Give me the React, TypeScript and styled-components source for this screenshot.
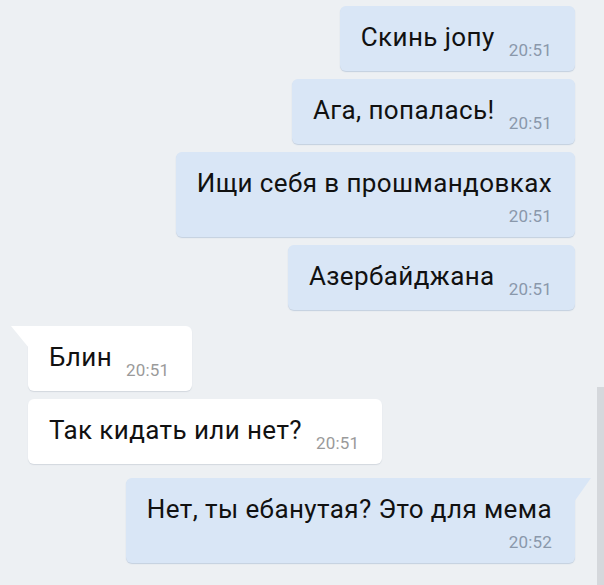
import React from 'react';
import styled, { createGlobalStyle, css } from 'styled-components';

const GlobalStyle = createGlobalStyle`
  html, body {
    margin: 0;
    padding: 0;
    background: #edf0f3;
  }
  body {
    font-family: Roboto, "Noto Sans", sans-serif;
  }
`;

const Screen = styled.div`
  position: relative;
  width: 604px;
  height: 585px;
  overflow: hidden;
  box-sizing: border-box;
  padding-top: 6px;
  background: #edf0f3;
  display: flex;
  flex-direction: column;
`;

const Row = styled.div<{ $out: boolean; $gap: number }>`
  display: flex;
  justify-content: ${p => (p.$out ? 'flex-end' : 'flex-start')};
  padding: ${p => (p.$out ? '0 29px 0 0' : '0 0 0 28px')};
  margin-top: ${p => p.$gap}px;
`;

const Bubble = styled.div<{ $out: boolean; $tail: boolean; $stacked: boolean }>`
  position: relative;
  display: flex;
  flex-direction: ${p => (p.$stacked ? 'column' : 'row')};
  align-items: ${p => (p.$stacked ? 'stretch' : 'flex-end')};
  gap: ${p => (p.$stacked ? '0' : '14px')};
  padding: 17px 23px 11px 21px;
  border-radius: 6px;
  background: ${p => (p.$out ? '#d9e6f6' : '#ffffff')};
  box-shadow: 0 1px 1px ${p => (p.$out ? 'rgba(120, 150, 185, 0.35)' : 'rgba(150, 160, 175, 0.3)')};

  ${p =>
    p.$tail &&
    (p.$out
      ? css`
          border-top-right-radius: 0;
          &::before {
            content: '';
            position: absolute;
            top: 0;
            right: -16px;
            width: 17px;
            height: 24px;
            background: #d9e6f6;
            clip-path: polygon(0 0, 100% 0, 0 100%);
          }
        `
      : css`
          border-top-left-radius: 0;
          &::before {
            content: '';
            position: absolute;
            top: 0;
            left: -17px;
            width: 18px;
            height: 22px;
            background: #ffffff;
            clip-path: polygon(0 0, 100% 0, 100% 100%);
          }
        `)}
`;

const Text = styled.span`
  font-size: 26px;
  line-height: 28px;
  letter-spacing: 0.4px;
  color: #111111;
  margin-bottom: 9px;
  white-space: nowrap;
`;

const Time = styled.span<{ $out: boolean }>`
  font-size: 17px;
  line-height: 20px;
  letter-spacing: 0.2px;
  color: ${p => (p.$out ? '#8a98ab' : '#9a9a9a')};
  align-self: flex-end;
  white-space: nowrap;
`;

const Scrollbar = styled.div`
  position: absolute;
  right: 0;
  top: 387px;
  bottom: 0;
  width: 7px;
  background: #d5d8dc;
`;

type Msg = {
  text: string;
  time: string;
  out: boolean;
  gap: number;
  tail?: boolean;
  stacked?: boolean;
};

const messages: Msg[] = [
  { text: 'Скинь јопу', time: '20:51', out: true, gap: 0 },
  { text: 'Ага, попалась!', time: '20:51', out: true, gap: 8 },
  { text: 'Ищи себя в прошмандовках', time: '20:51', out: true, gap: 8, stacked: true },
  { text: 'Азербайджана', time: '20:51', out: true, gap: 8 },
  { text: 'Блин', time: '20:51', out: false, gap: 16, tail: true },
  { text: 'Так кидать или нет?', time: '20:51', out: false, gap: 8 },
  { text: 'Нет, ты ебанутая? Это для мема', time: '20:52', out: true, gap: 14, tail: true, stacked: true },
];

export default function App() {
  return (
    <>
      <GlobalStyle />
      <Screen>
        {messages.map((m, i) => (
          <Row key={i} $out={m.out} $gap={m.gap}>
            <Bubble $out={m.out} $tail={!!m.tail} $stacked={!!m.stacked}>
              <Text>{m.text}</Text>
              <Time $out={m.out}>{m.time}</Time>
            </Bubble>
          </Row>
        ))}
        <Scrollbar />
      </Screen>
    </>
  );
}
